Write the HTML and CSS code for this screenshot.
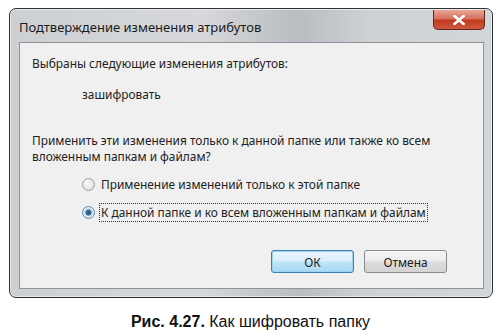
FILE: index.html
```html
<!DOCTYPE html>
<html lang="ru">
<head>
  <meta charset="UTF-8" />
  <title>Подтверждение изменения атрибутов</title>
  <link rel="stylesheet" href="styles.css">
</head>
<body>

<div class="window">
  <!-- Title bar -->
  <div class="titlebar">
    <span class="title">Подтверждение изменения атрибутов</span>
    <button class="close" type="button">
      <svg width="12" height="10" viewBox="0 0 12 10">
        <path d="M1.5 1 L10.5 9 M10.5 1 L1.5 9" stroke="#fff" stroke-width="2.6" stroke-linecap="square" />
      </svg>
    </button>
  </div>

  <!-- Dialog body -->
  <div class="panel">
    <p class="line">Выбраны следующие изменения атрибутов:</p>
    <p class="line change">зашифровать</p>
    <p class="line question">Применить эти изменения только к данной папке или также ко всем вложенным папкам и файлам?</p>

    <div class="options">
      <label class="option">
        <span class="radio"></span>
        <span class="option-text">Применение изменений только к этой папке</span>
      </label>
      <label class="option">
        <span class="radio checked"></span>
        <span class="option-text focused">К данной папке и ко всем вложенным папкам и файлам</span>
      </label>
    </div>

    <div class="buttons">
      <button class="btn default" type="button">ОК</button>
      <button class="btn" type="button">Отмена</button>
    </div>
  </div>
</div>

<p class="caption"><b>Рис. 4.27.</b> Как шифровать папку</p>

</body>
</html>
```

FILE: styles.css
```css
body {
  margin: 0;
  background: #fff;
  font-family: "Noto Sans", "Open Sans", sans-serif;
}

.window {
  box-sizing: border-box;
  width: 484px;
  height: 290px;
  margin: 8px 0 0 9px;
  padding: 0 8px 8px 9px;
  border: 1px solid #2f3134;
  border-radius: 7px;
  background: linear-gradient(90deg, #cdd0d3 0%, #d6d8db 40%, #b9bcc0 60%, #cfd2d5 75%, #d3d6d9 100%);
  box-shadow: inset 0 0 0 1px #e9eaec;
  display: flex;
  flex-direction: column;
}

.titlebar {
  height: 33px;
  display: flex;
  justify-content: space-between;
  align-items: flex-start;
  flex-shrink: 0;
}

.title {
  margin-top: 9px;
  font-size: 13px;
  color: #1a1a1a;
}

.close {
  width: 52px;
  height: 20px;
  margin-top: 1px;
  margin-right: -1px;
  padding: 0;
  border: 1px solid #5a2a22;
  border-top: none;
  border-radius: 0 0 5px 5px;
  background: linear-gradient(180deg, #e8a896 0%, #d4715d 45%, #c2391f 55%, #cf5a3e 100%);
  display: flex;
  align-items: center;
  justify-content: center;
}

.panel {
  flex: 1;
  background: #f0f0f0;
  border: 1px solid #8f9296;
  padding: 12px 12px 0 12px;
  font-size: 11.9px;
  color: #222;
}

.line {
  margin: 0;
  line-height: 16px;
}

.change {
  margin: 15px 0 0 50px;
}

.question {
  margin-top: 30px;
  width: 420px;
}

.options {
  margin: 11px 0 0 50px;
  display: flex;
  flex-direction: column;
  gap: 9px;
}

.option {
  display: flex;
  align-items: center;
  gap: 4px;
}

.radio {
  width: 11px;
  height: 11px;
  border: 1px solid #9a9ea3;
  border-radius: 50%;
  background: radial-gradient(circle at 40% 40%, #fafafa 0%, #e2e4e6 70%);
}

.radio.checked {
  border-color: #6a8aa6;
  background: radial-gradient(circle, #1d4f78 0%, #3c78a8 35%, #cfe1ee 45%, #eef4f9 100%);
}

.option-text {
  line-height: 17px;
  padding: 0 1px;
  border: 1px dotted transparent;
}

.option-text.focused {
  border-color: #333;
}

.buttons {
  display: flex;
  justify-content: flex-end;
  gap: 10px;
  margin: 28px 24px 0 0;
}

.btn {
  width: 83px;
  height: 23px;
  font-family: inherit;
  font-size: 11.9px;
  color: #222;
  border: 1px solid #8a8c8f;
  border-radius: 3px;
  background: linear-gradient(180deg, #f5f5f5 0%, #ebebeb 48%, #dcdcdc 52%, #d4d4d4 100%);
}

.btn.default {
  border-color: #3c7fb1;
  box-shadow: inset 0 0 0 1px #9ed3ef;
  background: linear-gradient(180deg, #eaf5fc 0%, #d9eefb 48%, #bee4f8 52%, #a7d9f5 100%);
}

.caption {
  margin: 15px 0 0;
  text-align: center;
  font-family: "Liberation Sans", Arial, sans-serif;
  font-size: 16px;
  color: #111;
}
```
